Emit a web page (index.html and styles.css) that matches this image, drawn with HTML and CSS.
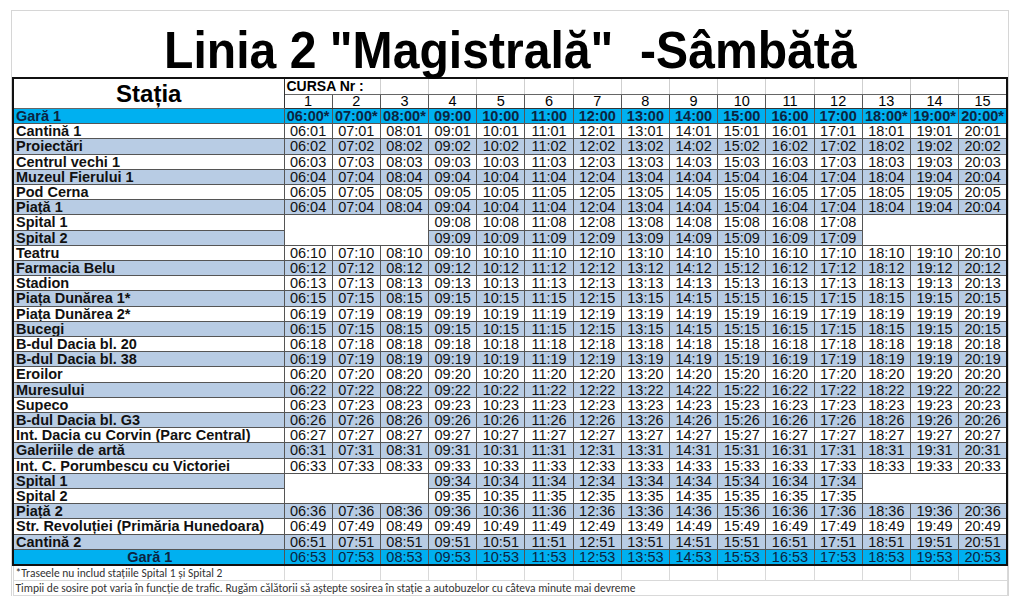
FILE: index.html
```html
<!DOCTYPE html>
<html lang="ro">
<head>
<meta charset="utf-8">
<title>Linia 2 Magistrală - Sâmbătă</title>
<link rel="stylesheet" href="styles.css">
</head>
<body>
<div class="sheet">
  <div class="title"><span class="title-text">Linia 2 "Magistrală" &nbsp;-Sâmbătă</span></div>
  <table class="orar">
    <colgroup><col class="c-st"><col span="15"></colgroup>
    <thead class="hd">
      <tr class="r-cursa">
        <th class="st-h" rowspan="2">Stația</th>
        <th class="cursa" colspan="2">CURSA Nr :</th>
        <th></th><th></th><th></th><th></th><th></th><th></th><th></th><th></th><th></th><th></th><th></th><th></th><th></th>
      </tr>
      <tr class="r-nr">
        <th>1</th><th>2</th><th>3</th><th>4</th><th>5</th><th>6</th><th>7</th><th>8</th><th>9</th><th>10</th><th>11</th><th>12</th><th>13</th><th>14</th><th>15</th>
      </tr>
    </thead>
    <tbody class="data">
      <tr class="hl first"><td class="st">Gară 1</td><td>06:00*</td><td>07:00*</td><td>08:00*</td><td>09:00</td><td>10:00</td><td>11:00</td><td>12:00</td><td>13:00</td><td>14:00</td><td>15:00</td><td>16:00</td><td>17:00</td><td>18:00*</td><td>19:00*</td><td>20:00*</td></tr>
      <tr class="w"><td class="st">Cantină 1</td><td>06:01</td><td>07:01</td><td>08:01</td><td>09:01</td><td>10:01</td><td>11:01</td><td>12:01</td><td>13:01</td><td>14:01</td><td>15:01</td><td>16:01</td><td>17:01</td><td>18:01</td><td>19:01</td><td>20:01</td></tr>
      <tr class="b"><td class="st">Proiectări</td><td>06:02</td><td>07:02</td><td>08:02</td><td>09:02</td><td>10:02</td><td>11:02</td><td>12:02</td><td>13:02</td><td>14:02</td><td>15:02</td><td>16:02</td><td>17:02</td><td>18:02</td><td>19:02</td><td>20:02</td></tr>
      <tr class="w"><td class="st">Centrul vechi 1</td><td>06:03</td><td>07:03</td><td>08:03</td><td>09:03</td><td>10:03</td><td>11:03</td><td>12:03</td><td>13:03</td><td>14:03</td><td>15:03</td><td>16:03</td><td>17:03</td><td>18:03</td><td>19:03</td><td>20:03</td></tr>
      <tr class="b"><td class="st">Muzeul Fierului 1</td><td>06:04</td><td>07:04</td><td>08:04</td><td>09:04</td><td>10:04</td><td>11:04</td><td>12:04</td><td>13:04</td><td>14:04</td><td>15:04</td><td>16:04</td><td>17:04</td><td>18:04</td><td>19:04</td><td>20:04</td></tr>
      <tr class="w"><td class="st">Pod Cerna</td><td>06:05</td><td>07:05</td><td>08:05</td><td>09:05</td><td>10:05</td><td>11:05</td><td>12:05</td><td>13:05</td><td>14:05</td><td>15:05</td><td>16:05</td><td>17:05</td><td>18:05</td><td>19:05</td><td>20:05</td></tr>
      <tr class="b"><td class="st">Piață 1</td><td>06:04</td><td>07:04</td><td>08:04</td><td>09:04</td><td>10:04</td><td>11:04</td><td>12:04</td><td>13:04</td><td>14:04</td><td>15:04</td><td>16:04</td><td>17:04</td><td>18:04</td><td>19:04</td><td>20:04</td></tr>
      <tr class="w"><td class="st">Spital 1</td><td class="gap" colspan="3" rowspan="2"></td><td>09:08</td><td>10:08</td><td>11:08</td><td>12:08</td><td>13:08</td><td>14:08</td><td>15:08</td><td>16:08</td><td>17:08</td><td class="gap" colspan="3" rowspan="2"></td></tr>
      <tr class="b"><td class="st">Spital 2</td><td>09:09</td><td>10:09</td><td>11:09</td><td>12:09</td><td>13:09</td><td>14:09</td><td>15:09</td><td>16:09</td><td>17:09</td></tr>
      <tr class="w"><td class="st">Teatru</td><td>06:10</td><td>07:10</td><td>08:10</td><td>09:10</td><td>10:10</td><td>11:10</td><td>12:10</td><td>13:10</td><td>14:10</td><td>15:10</td><td>16:10</td><td>17:10</td><td>18:10</td><td>19:10</td><td>20:10</td></tr>
      <tr class="b"><td class="st">Farmacia Belu</td><td>06:12</td><td>07:12</td><td>08:12</td><td>09:12</td><td>10:12</td><td>11:12</td><td>12:12</td><td>13:12</td><td>14:12</td><td>15:12</td><td>16:12</td><td>17:12</td><td>18:12</td><td>19:12</td><td>20:12</td></tr>
      <tr class="w"><td class="st">Stadion</td><td>06:13</td><td>07:13</td><td>08:13</td><td>09:13</td><td>10:13</td><td>11:13</td><td>12:13</td><td>13:13</td><td>14:13</td><td>15:13</td><td>16:13</td><td>17:13</td><td>18:13</td><td>19:13</td><td>20:13</td></tr>
      <tr class="b"><td class="st">Piața Dunărea 1*</td><td>06:15</td><td>07:15</td><td>08:15</td><td>09:15</td><td>10:15</td><td>11:15</td><td>12:15</td><td>13:15</td><td>14:15</td><td>15:15</td><td>16:15</td><td>17:15</td><td>18:15</td><td>19:15</td><td>20:15</td></tr>
      <tr class="w"><td class="st">Piața Dunărea 2*</td><td>06:19</td><td>07:19</td><td>08:19</td><td>09:19</td><td>10:19</td><td>11:19</td><td>12:19</td><td>13:19</td><td>14:19</td><td>15:19</td><td>16:19</td><td>17:19</td><td>18:19</td><td>19:19</td><td>20:19</td></tr>
      <tr class="b"><td class="st">Bucegi</td><td>06:15</td><td>07:15</td><td>08:15</td><td>09:15</td><td>10:15</td><td>11:15</td><td>12:15</td><td>13:15</td><td>14:15</td><td>15:15</td><td>16:15</td><td>17:15</td><td>18:15</td><td>19:15</td><td>20:15</td></tr>
      <tr class="w"><td class="st">B-dul Dacia bl. 20</td><td>06:18</td><td>07:18</td><td>08:18</td><td>09:18</td><td>10:18</td><td>11:18</td><td>12:18</td><td>13:18</td><td>14:18</td><td>15:18</td><td>16:18</td><td>17:18</td><td>18:18</td><td>19:18</td><td>20:18</td></tr>
      <tr class="b"><td class="st">B-dul Dacia bl. 38</td><td>06:19</td><td>07:19</td><td>08:19</td><td>09:19</td><td>10:19</td><td>11:19</td><td>12:19</td><td>13:19</td><td>14:19</td><td>15:19</td><td>16:19</td><td>17:19</td><td>18:19</td><td>19:19</td><td>20:19</td></tr>
      <tr class="w"><td class="st">Eroilor</td><td>06:20</td><td>07:20</td><td>08:20</td><td>09:20</td><td>10:20</td><td>11:20</td><td>12:20</td><td>13:20</td><td>14:20</td><td>15:20</td><td>16:20</td><td>17:20</td><td>18:20</td><td>19:20</td><td>20:20</td></tr>
      <tr class="b"><td class="st">Muresului</td><td>06:22</td><td>07:22</td><td>08:22</td><td>09:22</td><td>10:22</td><td>11:22</td><td>12:22</td><td>13:22</td><td>14:22</td><td>15:22</td><td>16:22</td><td>17:22</td><td>18:22</td><td>19:22</td><td>20:22</td></tr>
      <tr class="w"><td class="st">Supeco</td><td>06:23</td><td>07:23</td><td>08:23</td><td>09:23</td><td>10:23</td><td>11:23</td><td>12:23</td><td>13:23</td><td>14:23</td><td>15:23</td><td>16:23</td><td>17:23</td><td>18:23</td><td>19:23</td><td>20:23</td></tr>
      <tr class="b"><td class="st">B-dul Dacia bl. G3</td><td>06:26</td><td>07:26</td><td>08:26</td><td>09:26</td><td>10:26</td><td>11:26</td><td>12:26</td><td>13:26</td><td>14:26</td><td>15:26</td><td>16:26</td><td>17:26</td><td>18:26</td><td>19:26</td><td>20:26</td></tr>
      <tr class="w"><td class="st">Int. Dacia cu Corvin (Parc Central)</td><td>06:27</td><td>07:27</td><td>08:27</td><td>09:27</td><td>10:27</td><td>11:27</td><td>12:27</td><td>13:27</td><td>14:27</td><td>15:27</td><td>16:27</td><td>17:27</td><td>18:27</td><td>19:27</td><td>20:27</td></tr>
      <tr class="b"><td class="st">Galeriile de artă</td><td>06:31</td><td>07:31</td><td>08:31</td><td>09:31</td><td>10:31</td><td>11:31</td><td>12:31</td><td>13:31</td><td>14:31</td><td>15:31</td><td>16:31</td><td>17:31</td><td>18:31</td><td>19:31</td><td>20:31</td></tr>
      <tr class="w"><td class="st">Int. C. Porumbescu cu Victoriei</td><td>06:33</td><td>07:33</td><td>08:33</td><td>09:33</td><td>10:33</td><td>11:33</td><td>12:33</td><td>13:33</td><td>14:33</td><td>15:33</td><td>16:33</td><td>17:33</td><td>18:33</td><td>19:33</td><td>20:33</td></tr>
      <tr class="b"><td class="st">Spital 1</td><td class="gap" colspan="3" rowspan="2"></td><td>09:34</td><td>10:34</td><td>11:34</td><td>12:34</td><td>13:34</td><td>14:34</td><td>15:34</td><td>16:34</td><td>17:34</td><td class="gap" colspan="3" rowspan="2"></td></tr>
      <tr class="w"><td class="st">Spital 2</td><td>09:35</td><td>10:35</td><td>11:35</td><td>12:35</td><td>13:35</td><td>14:35</td><td>15:35</td><td>16:35</td><td>17:35</td></tr>
      <tr class="b"><td class="st">Piață 2</td><td>06:36</td><td>07:36</td><td>08:36</td><td>09:36</td><td>10:36</td><td>11:36</td><td>12:36</td><td>13:36</td><td>14:36</td><td>15:36</td><td>16:36</td><td>17:36</td><td>18:36</td><td>19:36</td><td>20:36</td></tr>
      <tr class="w"><td class="st">Str. Revoluției (Primăria Hunedoara)</td><td>06:49</td><td>07:49</td><td>08:49</td><td>09:49</td><td>10:49</td><td>11:49</td><td>12:49</td><td>13:49</td><td>14:49</td><td>15:49</td><td>16:49</td><td>17:49</td><td>18:49</td><td>19:49</td><td>20:49</td></tr>
      <tr class="b"><td class="st">Cantină 2</td><td>06:51</td><td>07:51</td><td>08:51</td><td>09:51</td><td>10:51</td><td>11:51</td><td>12:51</td><td>13:51</td><td>14:51</td><td>15:51</td><td>16:51</td><td>17:51</td><td>18:51</td><td>19:51</td><td>20:51</td></tr>
      <tr class="hl last"><td class="st">Gară 1</td><td>06:53</td><td>07:53</td><td>08:53</td><td>09:53</td><td>10:53</td><td>11:53</td><td>12:53</td><td>13:53</td><td>14:53</td><td>15:53</td><td>16:53</td><td>17:53</td><td>18:53</td><td>19:53</td><td>20:53</td></tr>
    </tbody>
    <tbody class="foot">
      <tr class="f1"><td class="note">*Traseele nu includ stațiile Spital 1 și Spital 2</td><td></td><td></td><td></td><td></td><td></td><td></td><td></td><td></td><td></td><td></td><td></td><td></td><td></td><td></td><td></td></tr>
      <tr class="f2"><td class="note" colspan="16">Timpii de sosire pot varia în funcție de trafic. Rugăm călătorii să aștepte sosirea în stație a autobuzelor cu câteva minute mai devreme</td></tr>
    </tbody>
  </table>
</div>
</body>
</html>
```

FILE: styles.css
```css
body {
  margin: 0;
  background: #ffffff;
  font-family: "Liberation Sans", Arial, sans-serif;
  color: #000;
}

.sheet {
  margin: 10px 0 0 11px;
  width: 996px;
  border: 1px solid #d6d6d6;
  border-bottom: none;
}

.title {
  height: 66px;
  box-sizing: border-box;
  padding-top: 13px;
  text-align: center;
  font-size: 52px;
  line-height: 52px;
  font-weight: bold;
  white-space: nowrap;
}

.title-text {
  display: inline-block;
  transform: scaleX(0.925);
}

.orar {
  width: 996px;
  table-layout: fixed;
  border-collapse: collapse;
}

.c-st { width: 271px; }

.orar th,
.orar td {
  padding: 0;
  white-space: nowrap;
  overflow: hidden;
  text-align: center;
  font-size: 14.5px;
  line-height: 14.2px;
}

/* header */
.hd {
  border-top: 2px solid #111;
  border-left: 2px solid #111;
  border-right: 2px solid #111;
}

.hd th {
  font-weight: normal;
}

.st-h {
  font-weight: bold !important;
  font-size: 24px !important;
  line-height: 24px !important;
  vertical-align: bottom;
  padding-bottom: 2px !important;
  border-right: 1px solid #333;
  border-bottom: 1px solid #333;
}

.r-cursa th {
  height: 15px;
  line-height: 15px;
  border-left: 1px solid #cfcfcf;
  border-bottom: 1px solid #666;
}

.r-cursa .cursa {
  text-align: left;
  font-weight: bold;
  font-size: 14px;
  padding-left: 2px;
  border-left: 1px solid #333;
}

.r-nr th {
  height: 13px;
  line-height: 13px;
  border-left: 1px solid #555;
  border-bottom: 1px solid #333;
}

/* data */
.data {
  border-left: 2px solid #111;
  border-right: 2px solid #111;
  border-bottom: 2px solid #111;
}

.data td {
  border: 1px solid #555;
  color: #111;
}

.data .st {
  text-align: left;
  font-weight: bold;
  padding-left: 2px;
}

.w td { background: #ffffff; }
.b td { background: #b8cce4; }
.hl td { background: #00b0f0; color: #0c2440; }

.first td { font-weight: bold; }
.last .st { text-align: center; }

.data .gap { background: #ffffff; }

/* footer notes */
.foot td {
  height: 14px;
  line-height: 14px;
  border: 1px solid #d9d9d9;
}

.foot .note {
  text-align: left;
  overflow: visible;
  padding-left: 2px;
  font-family: Carlito, "Liberation Sans Narrow", "Liberation Sans", sans-serif;
  font-size: 11.5px;
  color: #333;
}
```
